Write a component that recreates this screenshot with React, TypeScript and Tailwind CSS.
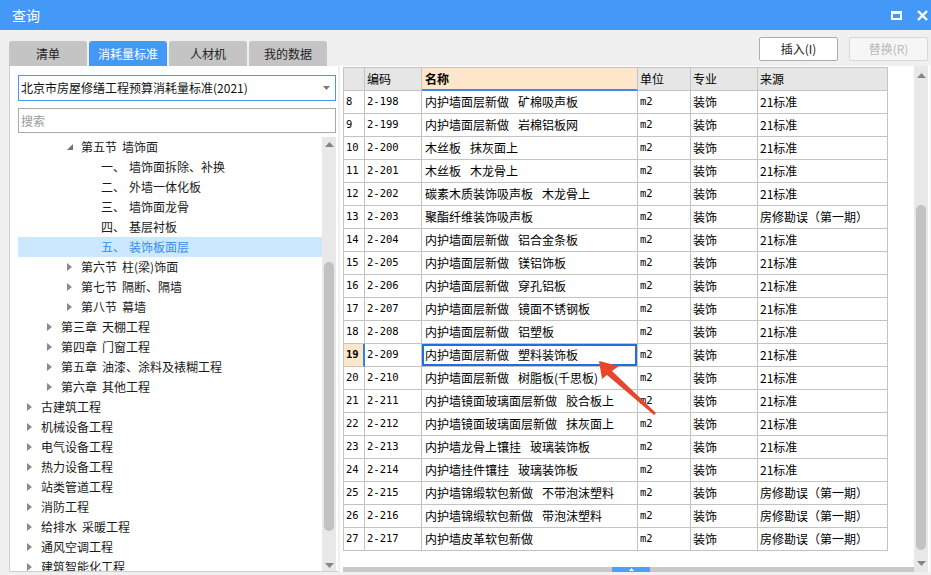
import React from 'react';

type TreeItem = { lv: number; label: string; num?: string; arrow?: 'open' | 'closed'; sel?: boolean };

const tree: TreeItem[] = [
  { lv: 2, label: '第五节 墙饰面', arrow: 'open' },
  { lv: 3, num: '一、', label: '墙饰面拆除、补换' },
  { lv: 3, num: '二、', label: '外墙一体化板' },
  { lv: 3, num: '三、', label: '墙饰面龙骨' },
  { lv: 3, num: '四、', label: '基层衬板' },
  { lv: 3, num: '五、', label: '装饰板面层', sel: true },
  { lv: 2, label: '第六节 柱(梁)饰面', arrow: 'closed' },
  { lv: 2, label: '第七节 隔断、隔墙', arrow: 'closed' },
  { lv: 2, label: '第八节 幕墙', arrow: 'closed' },
  { lv: 1, label: '第三章 天棚工程', arrow: 'closed' },
  { lv: 1, label: '第四章 门窗工程', arrow: 'closed' },
  { lv: 1, label: '第五章 油漆、涂料及裱糊工程', arrow: 'closed' },
  { lv: 1, label: '第六章 其他工程', arrow: 'closed' },
  { lv: 0, label: '古建筑工程', arrow: 'closed' },
  { lv: 0, label: '机械设备工程', arrow: 'closed' },
  { lv: 0, label: '电气设备工程', arrow: 'closed' },
  { lv: 0, label: '热力设备工程', arrow: 'closed' },
  { lv: 0, label: '站类管道工程', arrow: 'closed' },
  { lv: 0, label: '消防工程', arrow: 'closed' },
  { lv: 0, label: '给排水 采暖工程', arrow: 'closed' },
  { lv: 0, label: '通风空调工程', arrow: 'closed' },
  { lv: 0, label: '建筑智能化工程', arrow: 'closed' },
];

const S21 = '21标准';
const SFX = '房修勘误（第一期）';
const rows: [string, string, string, string][] = [
  ['8', '2-198', '内护墙面层新做 矿棉吸声板', S21],
  ['9', '2-199', '内护墙面层新做 岩棉铝板网', S21],
  ['10', '2-200', '木丝板 抹灰面上', S21],
  ['11', '2-201', '木丝板 木龙骨上', S21],
  ['12', '2-202', '碳素木质装饰吸声板 木龙骨上', S21],
  ['13', '2-203', '聚酯纤维装饰吸声板', SFX],
  ['14', '2-204', '内护墙面层新做 铝合金条板', S21],
  ['15', '2-205', '内护墙面层新做 镁铝饰板', S21],
  ['16', '2-206', '内护墙面层新做 穿孔铝板', S21],
  ['17', '2-207', '内护墙面层新做 镜面不锈钢板', S21],
  ['18', '2-208', '内护墙面层新做 铝塑板', S21],
  ['19', '2-209', '内护墙面层新做 塑料装饰板', S21],
  ['20', '2-210', '内护墙面层新做 树脂板(千思板)', S21],
  ['21', '2-211', '内护墙镜面玻璃面层新做 胶合板上', S21],
  ['22', '2-212', '内护墙镜面玻璃面层新做 抹灰面上', S21],
  ['23', '2-213', '内护墙龙骨上镶挂 玻璃装饰板', S21],
  ['24', '2-214', '内护墙挂件镶挂 玻璃装饰板', S21],
  ['25', '2-215', '内护墙锦缎软包新做 不带泡沫塑料', SFX],
  ['26', '2-216', '内护墙锦缎软包新做 带泡沫塑料', SFX],
  ['27', '2-217', '内护墙皮革软包新做', SFX],
];

const Up = () => (
  <svg width="9" height="5" viewBox="0 0 9 5"><polygon points="0,5 4.5,0 9,5" fill="#858585" /></svg>
);
const Down = () => (
  <svg width="9" height="5" viewBox="0 0 9 5"><polygon points="0,0 4.5,5 9,0" fill="#858585" /></svg>
);

function TreeRow({ it }: { it: TreeItem }) {
  const arrowLeft = 9 + 20 * it.lv;
  return (
    <div className={`h-[20px] shrink-0 flex items-center text-[12px] ${it.sel ? 'bg-[#cce8ff] text-[#3a8ee6]' : 'text-[#1a1a1a]'}`}>
      <div style={{ width: arrowLeft }} className="shrink-0" />
      <div className="w-[14px] shrink-0 flex items-center">
        {it.arrow === 'closed' && (
          <svg width="5" height="8" viewBox="0 0 5 8"><polygon points="0,0 5,4 0,8" fill="#8a8a8a" /></svg>
        )}
        {it.arrow === 'open' && (
          <svg width="6" height="6" viewBox="0 0 6 6"><polygon points="6,0 6,6 0,6" fill="#707070" /></svg>
        )}
      </div>
      {it.num ? (
        <div className="flex items-center">
          <span className="w-[28px]">{it.num}</span>
          <span>{it.label}</span>
        </div>
      ) : (
        <Spaced text={it.label} gap="w-[5px]" />
      )}
    </div>
  );
}

function Spaced({ text, gap }: { text: string; gap: string }) {
  const parts = text.split(' ');
  return (
    <span className="flex items-center whitespace-nowrap">
      {parts.map((p, i) => (
        <React.Fragment key={i}>
          {i > 0 && <span className={`${gap} shrink-0 inline-block`} />}
          <span>{p}</span>
        </React.Fragment>
      ))}
    </span>
  );
}

const W = ['w-[21px]', 'w-[57px]', 'w-[216px]', 'w-[53px]', 'w-[67px]', 'w-[130px]'];

export default function App() {
  return (
    <div className="w-[931px] h-[575px] overflow-hidden bg-[#f0f0f0] flex flex-col font-['Noto_Sans_CJK_SC',sans-serif] text-black relative">
      {/* title bar */}
      <div className="h-[30px] shrink-0 bg-[#4499f7] flex items-center pl-[12px] pr-[3px] text-white">
        <span className="text-[14px] leading-none">查询</span>
        <div className="ml-auto flex items-center gap-[15px]">
          <span className="w-[11px] h-[9px] border-2 border-t-[3px] border-white box-border" />
          <svg width="11" height="11" viewBox="0 0 11 11">
            <path d="M1 1 L10 10 M10 1 L1 10" stroke="#fff" strokeWidth="2.4" />
          </svg>
        </div>
      </div>

      <div className="flex-1 flex flex-col pl-[9px] pr-[1px]">
        {/* tabs + buttons */}
        <div className="h-[36px] shrink-0 flex justify-between">
          <div className="flex items-end gap-[2px]">
            {['清单', '消耗量标准', '人材机', '我的数据'].map((t, i) => (
              <div
                key={t}
                className={`w-[78px] h-[25px] rounded-t-[3px] flex items-center justify-center text-[12px] ${i === 1 ? 'bg-[#4499f7] text-white' : 'bg-[#c4c4c4] text-[#222]'}`}
              >
                {t}
              </div>
            ))}
          </div>
          <div className="flex gap-[11px] pt-[7px] pr-[2px]">
            <div className="w-[79px] h-[24px] bg-white border border-[#adadad] rounded-[2px] flex items-center justify-center text-[12px] text-[#222]">
              插入(I)
            </div>
            <div className="w-[79px] h-[24px] bg-[#f6f6f6] border border-[#d8d8d8] rounded-[2px] flex items-center justify-center text-[12px] text-[#b8b8b8]">
              替换(R)
            </div>
          </div>
        </div>

        {/* panels */}
        <div className="h-[506px] shrink-0 flex gap-[2px]">
          {/* left panel */}
          <div className="w-[329px] bg-white border-l border-b border-[#d0d0d0] flex flex-col pl-[8px] pr-[2px]">
            <div className="mt-[9px] h-[26px] border border-[#4499f7] flex items-center pl-[2px] pr-[5px] text-[12px] text-[#111]">
              <span>北京市房屋修缮工程预算消耗量标准(2021)</span>
              <svg className="ml-auto" width="7" height="4" viewBox="0 0 7 4"><polygon points="0,0 7,0 3.5,4" fill="#7a7a7a" /></svg>
            </div>
            <div className="mt-[7px] h-[25px] border border-[#a9a9a9] flex items-center pl-[2px] text-[12px] text-[#9a9a9a]">
              搜索
            </div>
            <div className="mt-[4px] flex-1 flex min-h-0">
              <div className="flex-1 flex flex-col overflow-hidden">
                {tree.map((it, i) => (
                  <TreeRow key={i} it={it} />
                ))}
              </div>
              <div className="w-[14px] bg-[#e8e8e8] flex flex-col items-center">
                <div className="h-[14px] flex items-center justify-center"><Up /></div>
                <div className="mt-[111px] w-[10px] h-[269px] rounded-full bg-[#c2c2c2]" />
                <div className="flex-1" />
                <div className="h-[12px] flex items-center justify-center"><Down /></div>
              </div>
            </div>
          </div>

          {/* right panel */}
          <div className="w-[590px] bg-white flex">
            <div className="flex-1 flex flex-col pl-[3px] pt-[1px]">
              <div className="w-[545px] border-l border-t border-[#c3c3c3] text-[12px]">
                {/* header */}
                <div className="flex h-[23px] bg-[#e6e6e6]">
                  <div className={`${W[0]} border-r border-b border-[#c3c3c3]`} />
                  <div className={`${W[1]} border-r border-b border-[#c3c3c3] flex items-center pl-[2px]`}>编码</div>
                  <div className={`${W[2]} border-r border-b-2 border-b-[#3d8ee8] border-r-[#c3c3c3] bg-[#fde6c9] flex items-center pl-[3px] font-bold`}>名称</div>
                  <div className={`${W[3]} border-r border-b border-[#c3c3c3] flex items-center pl-[2px]`}>单位</div>
                  <div className={`${W[4]} border-r border-b border-[#c3c3c3] flex items-center pl-[2px]`}>专业</div>
                  <div className={`${W[5]} border-r border-b border-[#c3c3c3] flex items-center pl-[2px]`}>来源</div>
                </div>
                {rows.map((r) => {
                  const sel = r[0] === '19';
                  return (
                    <div key={r[0]} className="flex h-[23px]">
                      <div
                        className={`${W[0]} border-b flex items-center pl-[2px] font-['DejaVu_Sans_Mono',monospace] text-[10.5px] ${sel ? 'bg-[#fde6c9] font-bold border-r-2 border-r-[#2f80ea] border-b-[#c3c3c3]' : 'border-r border-[#c3c3c3]'}`}
                      >
                        {r[0]}
                      </div>
                      <div className={`${W[1]} border-r border-b border-[#c3c3c3] flex items-center pl-[2px] font-['DejaVu_Sans_Mono',monospace] text-[10.5px]`}>
                        {r[1]}
                      </div>
                      <div
                        className={`${W[2]} border-r border-b border-[#c3c3c3] flex items-center pl-[3px] ${sel ? 'shadow-[inset_0_0_0_2px_#1e6fe6]' : ''}`}
                      >
                        <Spaced text={r[2]} gap="w-[9px]" />
                      </div>
                      <div className={`${W[3]} border-r border-b border-[#c3c3c3] flex items-center pl-[2px] font-['DejaVu_Sans_Mono',monospace] text-[10.5px]`}>
                        m2
                      </div>
                      <div className={`${W[4]} border-r border-b border-[#c3c3c3] flex items-center pl-[2px]`}>装饰</div>
                      <div className={`${W[5]} border-r border-b border-[#c3c3c3] flex items-center pl-[2px] whitespace-pre`}>{r[3]}</div>
                    </div>
                  );
                })}
              </div>
              <div className="flex-1" />
              <div className="h-[5px] bg-[#c8c8c8] flex">
                <div className="ml-[269px] w-[38px] h-[5px] bg-[#4da0f7] flex items-center justify-center">
                  <svg width="5" height="3" viewBox="0 0 5 3"><polygon points="0,3 2.5,0 5,3" fill="#fff" /></svg>
                </div>
              </div>
            </div>
            <div className="w-[14px] mr-[2px] bg-[#e8e8e8] flex flex-col items-center">
              <div className="h-[18px] flex items-center justify-center"><Up /></div>
              <div className="mt-[121px] w-[10px] h-[345px] rounded-full bg-[#c2c2c2]" />
              <div className="flex-1" />
              <div className="h-[18px] flex items-center justify-center"><Down /></div>
            </div>
          </div>
        </div>
      </div>

      {/* red annotation arrow */}
      <svg className="absolute left-0 top-0 pointer-events-none" width="931" height="575" viewBox="0 0 931 575">
        <polygon points="599,361 619,366 612,371 656,413 654,415 607,375 602,379" fill="#e8462c" />
      </svg>
    </div>
  );
}
